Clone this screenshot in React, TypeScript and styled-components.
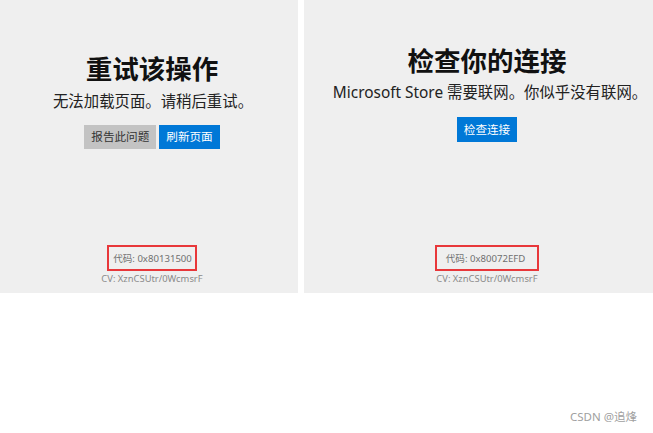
import React from "react";
import styled, { createGlobalStyle } from "styled-components";

const Global = createGlobalStyle`
  html, body { margin: 0; padding: 0; background: #ffffff; }
  body { font-family: "Segoe UI", "Noto Sans", "Noto Sans CJK SC", sans-serif; }
`;

const Page = styled.div`
  width: 653px;
  height: 433px;
  background: #ffffff;
  display: flex;
  flex-direction: column;
`;

const Panels = styled.div`
  display: grid;
  grid-template-columns: 298px 1fr;
  column-gap: 6px;
  height: 293px;
`;

const Panel = styled.section<{ $top: number; $shift: number }>`
  background: #efefef;
  display: flex;
  flex-direction: column;
  align-items: center;
  padding: ${(p) => p.$top}px 0 7px ${(p) => p.$shift}px;
  box-sizing: border-box;
  height: 100%;
`;

const Title = styled.h1`
  margin: 0;
  font-family: "Noto Sans CJK SC", sans-serif;
  font-size: 26.5px;
  font-weight: 700;
  line-height: 30px;
  color: #111111;
  white-space: nowrap;
`;

const Subtitle = styled.p<{ $gap: number; $nudge: number }>`
  margin: ${(p) => p.$gap}px 0 0 ${(p) => p.$nudge}px;
  font-family: "Noto Sans", "Noto Sans CJK SC", sans-serif;
  font-size: 15.4px;
  line-height: 22px;
  color: #222222;
  white-space: nowrap;
`;

const Actions = styled.div<{ $gap: number }>`
  margin-top: ${(p) => p.$gap}px;
  display: flex;
  gap: 3px;
`;

const Button = styled.button<{ $primary?: boolean; $h: number }>`
  height: ${(p) => p.$h}px;
  padding: 0 7px;
  border: none;
  border-radius: 0;
  font-family: "Noto Sans CJK SC", sans-serif;
  font-size: 11.6px;
  line-height: 1;
  background: ${(p) => (p.$primary ? "#0078d7" : "#c3c3c3")};
  color: ${(p) => (p.$primary ? "#ffffff" : "#333333")};
  cursor: pointer;
`;

const Footer = styled.div`
  margin-top: auto;
  display: flex;
  flex-direction: column;
  align-items: center;
`;

const CodeBox = styled.div<{ $pl: number; $pr: number }>`
  border: 2px solid #e8373a;
  padding: 0 ${(p) => p.$pr}px 0 ${(p) => p.$pl}px;
  height: 26px;
  box-sizing: border-box;
  display: flex;
  align-items: center;
  font-family: "Noto Sans", "Noto Sans CJK SC", sans-serif;
  font-size: 9.6px;
  color: #6f6f6f;
  white-space: nowrap;
`;

const CV = styled.div`
  margin-top: 1px;
  font-family: "Noto Sans", sans-serif;
  font-size: 9.4px;
  line-height: 14px;
  color: #8a8a8a;
  white-space: nowrap;
`;

const Watermark = styled.div`
  display: flex;
  justify-content: flex-end;
  padding: 116px 16px 0 0;
  font-family: "Noto Sans", "Noto Sans CJK SC", sans-serif;
  font-size: 11.5px;
  line-height: 16px;
  color: #a0a0a0;
`;

export default function App() {
  return (
    <>
      <Global />
      <Page>
        <Panels>
          <Panel $top={53} $shift={6}>
            <Title>重试该操作</Title>
            <Subtitle $gap={8} $nudge={2}>
              无法加载页面。请稍后重试。
            </Subtitle>
            <Actions $gap={12}>
              <Button $h={24}>报告此问题</Button>
              <Button $h={24} $primary>
                刷新页面
              </Button>
            </Actions>
            <Footer>
              <CodeBox $pl={4} $pr={3}>代码: 0x80131500</CodeBox>
              <CV>CV: XznCSUtr/0WcmsrF</CV>
            </Footer>
          </Panel>
          <Panel $top={45} $shift={17}>
            <Title>检查你的连接</Title>
            <Subtitle $gap={7} $nudge={6}>
              Microsoft Store 需要联网。你似乎没有联网。
            </Subtitle>
            <Actions $gap={13}>
              <Button $h={25} $primary>
                检查连接
              </Button>
            </Actions>
            <Footer>
              <CodeBox $pl={9} $pr={12}>代码: 0x80072EFD</CodeBox>
              <CV>CV: XznCSUtr/0WcmsrF</CV>
            </Footer>
          </Panel>
        </Panels>
        <Watermark>CSDN @追烽</Watermark>
      </Page>
    </>
  );
}
